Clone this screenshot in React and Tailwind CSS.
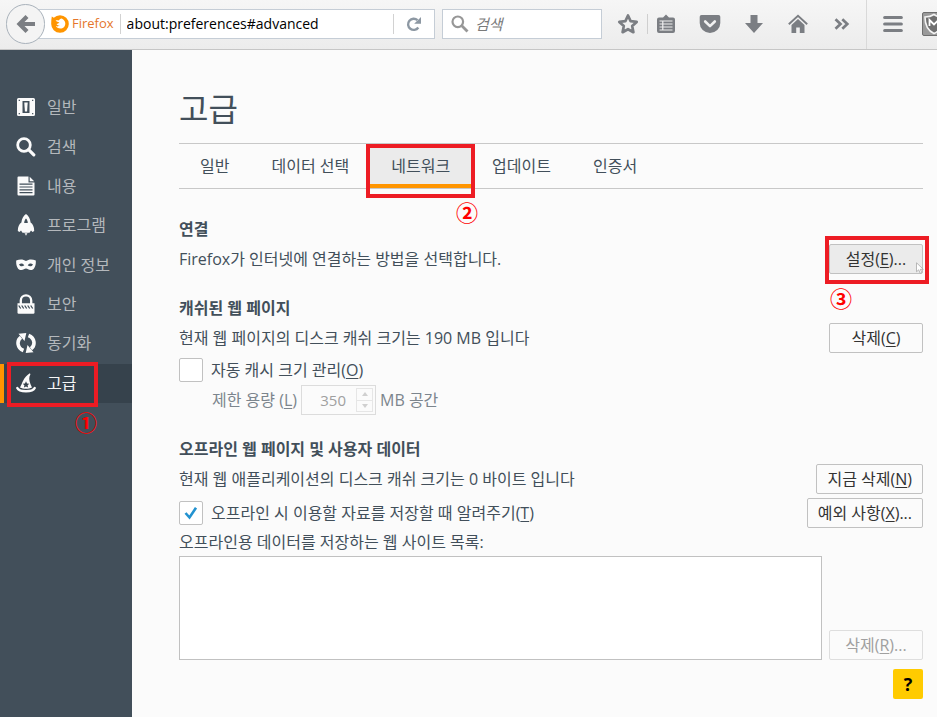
import React from "react";

const ICON = "h-5 w-5 shrink-0 text-[#fbfbfb]";

function SwitchIcon() {
  return (
    <svg viewBox="0 0 20 20" className={ICON} aria-hidden="true">
      <path fillRule="evenodd" fill="currentColor" d="M2.500 1h15A1.500 1.500 0 0 1 19 2.500v15a1.500 1.500 0 0 1-1.500 1.500h-15A1.500 1.500 0 0 1 1 17.500v-15A1.500 1.500 0 0 1 2.500 1zM6.500 4v12h7V4zM2.700 2.700v1.200h1.200V2.700zM16.100 2.700v1.200h1.200V2.700zM2.700 16.100v1.200h1.200v-1.200zM16.100 16.100v1.200h1.200v-1.200z" />
      <path fill="currentColor" d="M8.300 5.500h3.400l-.6 9H8.900z" />
    </svg>
  );
}

function SearchIcon() {
  return (
    <svg viewBox="0 0 20 20" className={ICON} fill="none" stroke="currentColor" aria-hidden="true">
      <circle cx="8" cy="8" r="6.300" strokeWidth="2.800" />
      <path d="M12.600 12.600l5.200 5.200" strokeWidth="3.200" strokeLinecap="round" />
    </svg>
  );
}

function DocIcon() {
  return (
    <svg viewBox="0 0 20 20" className={ICON} aria-hidden="true">
      <path fill="currentColor" d="M2.500.5h10V6.500H18.500v12a1 1 0 0 1-1 1h-15a1 1 0 0 1-1-1v-17a1 1 0 0 1 1-1z" />
      <path fill="currentColor" d="M13.700.8L18.200 5.300h-4.500z" />
      <path stroke="#424f5a" strokeWidth="1.200" d="M3.500 8.200h13M3.500 11h13M3.500 13.800h13M3.500 16.600h13" />
    </svg>
  );
}

function RocketIcon() {
  return (
    <svg viewBox="0 0 20 22" className="h-[22px] w-5 shrink-0 text-[#fbfbfb]" aria-hidden="true">
      <path fillRule="evenodd" fill="currentColor" d="M10 0c2.600 1.800 4.200 4.600 4.600 8.500 2.200 1.600 3.600 4 3.600 8.500l-1.700 1-1.500-1.500-1.500 2.200h-7L5 16.500 3.500 18l-1.700-1c0-4.500 1.400-6.900 3.600-8.500C5.800 4.600 7.400 1.800 10 0zm0 4.500c-1 1-1.700 2.500-1.800 4.500h3.600c-.1-2-.8-3.500-1.800-4.500z" />
      <path fill="currentColor" d="M8.300 18.500l1.700 3.300 1.700-3.300-.8.200-.9 1-.9-1z" />
    </svg>
  );
}

function MaskIcon() {
  return (
    <svg viewBox="0 0 20 20" className={ICON} aria-hidden="true">
      <path fillRule="evenodd" fill="currentColor" d="M.2 5.500c3.700-1.600 7.200-1.400 9.800.6 2.600-2 6.100-2.200 9.800-.6.300 5-1.300 9.500-5.200 9.500-2.100 0-3.100-1.600-4.600-1.600S7.500 15 5.400 15C1.500 15-.1 10.500.2 5.500zM3 9.400c1.200 2.200 3.500 2.300 5.300.9C7 8.200 4.800 7.900 3 9.400zm14 0c-1.800-1.500-4-1.200-5.300.9 1.800 1.400 4.100 1.300 5.300-.9z" />
    </svg>
  );
}

function LockIcon() {
  return (
    <svg viewBox="0 0 20 20" className={ICON} aria-hidden="true">
      <path fill="none" stroke="currentColor" strokeWidth="2.300" d="M4.800 10V6.500a5.200 5.200 0 0 1 10.400 0V10" />
      <path fill="currentColor" d="M1.500 9.300h17v9.200a1.200 1.200 0 0 1-1.200 1.200H2.700a1.200 1.200 0 0 1-1.200-1.200z" />
      <path stroke="#424f5a" strokeWidth="1.300" d="M2.700 11.500l2 3M5.700 11.500l2 3M8.700 11.500l2 3M11.700 11.500l2 3M14.700 11.500l2 3" />
    </svg>
  );
}

function SyncIcon() {
  return (
    <svg viewBox="0 0 20 20" className={ICON} aria-hidden="true">
      <path fill="none" stroke="currentColor" strokeWidth="3.600" d="M7.500 17.500C1 15 .5 7.500 5 4.200M12.500 2.500c6.500 2.500 7 10 2.500 13.300" />
      <path fill="currentColor" d="M2.500.8L10.300 0 8.500 8zM17.500 19.200l-7.800.8L11.500 12z" />
    </svg>
  );
}

function WizardIcon() {
  return (
    <svg viewBox="0 0 20 20" className={ICON} aria-hidden="true">
      <path fill="currentColor" d="M4 14.500C6.500 10.500 7 4.500 13.800.3c1.200 1 .3 1.700-.3 3.200-.8 2.500.2 6.500 2.500 11-3.300 1.800-8.700 1.800-12 0z" />
      <path fill="#36424c" d="M10 8.300l1 2.100 2.300.3-1.700 1.600.5 2.300-2.100-1.200-2.100 1.200.5-2.300-1.700-1.600 2.300-.3z" />
      <path fill="none" stroke="currentColor" strokeWidth="2.400" strokeLinecap="round" d="M1.300 15c2 4.300 15.400 4.300 17.400 0" />
    </svg>
  );
}

const categories = [
  { label: "일반", Icon: SwitchIcon },
  { label: "검색", Icon: SearchIcon },
  { label: "내용", Icon: DocIcon },
  { label: "프로그램", Icon: RocketIcon },
  { label: "개인 정보", Icon: MaskIcon },
  { label: "보안", Icon: LockIcon },
  { label: "동기화", Icon: SyncIcon },
  { label: "고급", Icon: WizardIcon, active: true },
];

const tabs = ["일반", "데이터 선택", "네트워크", "업데이트", "인증서"];

function Frame({ className }) {
  return <span aria-hidden="true" className={"pointer-events-none absolute border-4 border-[#ed1c24] " + className} />;
}

function Step({ children, className }) {
  return (
    <span className={"pointer-events-none absolute text-[22px] leading-6 font-bold text-[#ff0000] " + className}>
      {children}
    </span>
  );
}

function Key({ children }) {
  return (
    <>
      (<span className="underline underline-offset-2">{children}</span>)
    </>
  );
}

function PushButton({ children, className = "", ...rest }) {
  return (
    <button
      type="button"
      className={
        "h-[30px] min-w-[94px] shrink-0 rounded-xs border border-[#c1c1c1] px-2.5 whitespace-nowrap text-[#333] disabled:border-[#dedede] disabled:text-[#a0a0a0] " +
        className
      }
      {...rest}
    >
      {children}
    </button>
  );
}

function Check({ id, defaultChecked }) {
  return (
    <span className="relative h-6 w-6 shrink-0">
      <input
        id={id}
        type="checkbox"
        defaultChecked={defaultChecked}
        className="peer block h-6 w-6 appearance-none rounded-xs border border-[#c1c1c1] bg-white"
      />
      <svg viewBox="0 0 24 24" className="pointer-events-none absolute inset-0 hidden h-6 w-6 peer-checked:block" aria-hidden="true">
        <path d="M6.500 12l4 4.500L17 6.800" fill="none" stroke="#2292d0" strokeWidth="2.600" />
      </svg>
    </span>
  );
}

function ToolButton({ label, className = "", children }) {
  return (
    <button type="button" aria-label={label} className={"flex h-6 w-6 shrink-0 items-center justify-center text-[#7b7e83] " + className}>
      {children}
    </button>
  );
}

function Toolbar() {
  return (
    <header className="flex h-[50px] items-center overflow-hidden border-b border-[#c6c6c6] bg-linear-to-b from-[#f6f6f6] to-[#ececec] pb-px pl-1.5">
      <button
        type="button"
        aria-label="뒤로"
        className="z-10 flex h-10 w-[39px] shrink-0 items-center justify-center rounded-full border border-[#a9b2bb] bg-[#f4f4f4]"
      >
        <svg viewBox="0 0 20 20" className="h-5 w-5" aria-hidden="true">
          <path d="M11 2.500L3.500 10l7.500 7.500M4.500 10H19" fill="none" stroke="#7b7e83" strokeWidth="4.200" />
        </svg>
      </button>
      <div className="-ml-2 flex h-[30px] min-w-0 flex-1 items-center border border-[#c5cdd6] bg-white pl-[13px]">
        <svg viewBox="0 0 18 18" className="h-[18px] w-[18px] shrink-0" aria-hidden="true">
          <path fill="#ff9500" d="M.8 1.500l2 1.300A8.800 8.800 0 0 1 9 .2a8.800 8.800 0 1 1-8.800 8.800C.2 6.500.3 4 .8 1.500z" />
          <path fill="#fff" d="M4.600 5.800c.9-.6 2-.6 2.900-.2.800-1.200 1.700-1.800 3.200-2.200 2.400 1 3.600 3 3.600 5.200 0 3-2.100 5-4.900 5-2.300 0-3.800-1-4.600-2.800 1.300.8 2.500.8 4-.2-1.800.1-2.900-.6-3.200-1.500.5-.6 1.100-.7 1.700-.7.200-.6.700-1 1.300-1.300-1.500.1-2.700-.3-4-1.300z" />
        </svg>
        <span className="ml-[3px] text-[13px] text-[#e5762b]">Firefox</span>
        <span className="mx-1.5 h-5 w-px bg-[#d2d2d2]" />
        <input
          aria-label="주소"
          defaultValue="about:preferences#advanced"
          className="min-w-0 flex-1 bg-transparent text-sm text-black outline-none"
        />
        <span className="h-5 w-px bg-[#d2d2d2]" />
        <button type="button" aria-label="새로 고침" className="flex h-full w-10 shrink-0 items-center justify-center">
          <svg viewBox="0 0 16 16" className="h-4 w-4" aria-hidden="true">
            <path d="M12.300 11.500A5.600 5.600 0 1 1 11.500 4.200" fill="none" stroke="#8d98a3" strokeWidth="2.400" />
            <path d="M15 1v6.800H8.200z" fill="#8d98a3" />
          </svg>
        </button>
      </div>
      <div className="ml-[7px] flex h-[30px] w-40 shrink-0 items-center border border-[#c5cdd6] bg-white pl-2">
        <svg viewBox="0 0 18 18" className="h-[18px] w-[18px] shrink-0" fill="none" stroke="#979797" aria-hidden="true">
          <circle cx="6.800" cy="6.800" r="5.300" strokeWidth="2.200" />
          <path d="M10.800 10.800l5.700 5.700" strokeWidth="2.800" />
        </svg>
        <input
          type="search"
          aria-label="검색"
          placeholder="검색"
          className="ml-1.5 min-w-0 flex-1 bg-transparent text-[15px] italic outline-none placeholder:text-[#7a7a7a]"
        />
      </div>
      <ToolButton label="북마크" className="ml-3.5">
        <svg viewBox="0 0 22 22" className="h-[22px] w-[22px]" aria-hidden="true">
          <path d="M11 2.500l2.600 5.600 6.100.8-4.500 4.200 1.200 6.100L11 16.200l-5.400 3 1.200-6.100-4.500-4.200 6.100-.8z" fill="none" stroke="#7b7e83" strokeWidth="2.700" strokeLinejoin="round" />
        </svg>
      </ToolButton>
      <span className="ml-[7px] h-5 w-px shrink-0 bg-[#cfcfcf]" />
      <ToolButton label="북마크 목록" className="ml-1.5">
        <svg viewBox="0 0 20 20" className="h-5 w-5" aria-hidden="true">
          <path fill="currentColor" d="M7 3.500L10 .5l3 3h4a2 2 0 0 1 2 2V17a2 2 0 0 1-2 2H3a2 2 0 0 1-2-2V5.500a2 2 0 0 1 2-2z" />
          <path stroke="#f0f0f0" strokeWidth="1.200" d="M3.500 7h13M3.500 10h13M3.500 13h13M3.500 16h13M6.800 6.500v10" />
        </svg>
      </ToolButton>
      <ToolButton label="Pocket" className="ml-5">
        <svg viewBox="0 0 22 20" className="h-5 w-[22px]" aria-hidden="true">
          <path fill="currentColor" d="M2.500 1h17a1.800 1.800 0 0 1 1.800 1.800V9a10.300 10 0 0 1-20.600 0V2.800A1.800 1.800 0 0 1 2.500 1z" />
          <path d="M6.200 7.500l4.800 4.600 4.800-4.600" fill="none" stroke="#f2f2f2" strokeWidth="2.600" strokeLinecap="round" strokeLinejoin="round" />
        </svg>
      </ToolButton>
      <ToolButton label="다운로드" className="ml-5">
        <svg viewBox="0 0 20 20" className="h-5 w-5" aria-hidden="true">
          <path fill="currentColor" d="M6.500 1h7v8H19l-9 10-9-10h5.500z" />
        </svg>
      </ToolButton>
      <ToolButton label="홈" className="ml-5">
        <svg viewBox="0 0 20 20" className="h-5 w-5" aria-hidden="true">
          <path d="M.8 10.300L10 1.800l9.200 8.500" fill="none" stroke="currentColor" strokeWidth="1.900" />
          <path fill="currentColor" d="M10 5l6.500 6v8h-4.700v-5.500H8.200V19H3.500v-8z" />
        </svg>
      </ToolButton>
      <ToolButton label="더 보기" className="ml-5">
        <svg viewBox="0 0 16 16" className="h-4 w-4" aria-hidden="true">
          <path d="M1.500 3.200L6.500 8l-5 4.800M8.300 3.200l5 4.800-5 4.800" fill="none" stroke="currentColor" strokeWidth="2.700" />
        </svg>
      </ToolButton>
      <span className="ml-3 h-[49px] w-px shrink-0 bg-[#d9d9d9]" />
      <ToolButton label="메뉴" className="ml-3.5">
        <svg viewBox="0 0 20 18" className="h-[18px] w-5" aria-hidden="true">
          <path d="M1.700 2.500h16.600M1.700 9h16.600M1.700 15.500h16.600" stroke="currentColor" strokeWidth="3.200" strokeLinecap="round" />
        </svg>
      </ToolButton>
      <button type="button" aria-label="McAfee" className="ml-[17px] flex h-6 w-[15px] shrink-0 justify-start overflow-hidden">
        <svg viewBox="0 0 24 24" className="h-6 w-6 shrink-0" aria-hidden="true">
          <rect x=".5" y=".5" width="23" height="23" rx="1.500" fill="#9a9a9a" stroke="#6f6f6f" />
          <path d="M3 5c3.500 0 6.500-.8 9-2.500C14.500 4.200 17.500 5 21 5c0 8-2.500 13.500-9 16.500C5.500 18.500 3 13 3 5z" fill="#707070" stroke="#f4f4f4" strokeWidth="1.600" />
          <path d="M7.500 14V8l4.500 4.500L16.500 8v6" fill="none" stroke="#fff" strokeWidth="1.800" />
        </svg>
      </button>
    </header>
  );
}

function Sidebar() {
  return (
    <nav className="w-[132px] shrink-0 bg-[#424f5a] pt-[38px]">
      <ul className="flex h-[315px] flex-col">
        {categories.map(({ label, Icon, active }) => (
          <li key={label} className="relative flex flex-1">
            <a
              href={"#" + label}
              className={
                active
                  ? "flex flex-1 items-center gap-[11px] border-l-4 border-[#ff9500] bg-[#36424c] pb-px pl-3 text-[#f5f5f5]"
                  : "flex flex-1 items-center gap-[11px] pb-px pl-4 text-[#b4b8bc]"
              }
            >
              <Icon />
              {label}
            </a>
            {active && (
              <>
                <Frame className="-top-0.5 -bottom-1 left-[7px] w-[91px]" />
                <Step className="top-[46px] left-[75px]">①</Step>
              </>
            )}
          </li>
        ))}
      </ul>
    </nav>
  );
}

function Tabs() {
  return (
    <div role="tablist" className="flex h-[46px] border-y border-[#c8c8c8]">
      {tabs.map((tab) => {
        const active = tab === "네트워크";
        return (
          <div key={tab} className="relative flex">
            <button
              type="button"
              role="tab"
              aria-selected={active}
              className={
                active
                  ? "border-b-4 border-[#ff9500] bg-[#ebebeb] px-[21px] pt-1"
                  : "px-[21px]"
              }
            >
              {tab}
            </button>
            {active && (
              <>
                <Frame className="-inset-x-1 top-0 -bottom-2.5" />
                <Step className="top-14 -right-[7px]">②</Step>
              </>
            )}
          </div>
        );
      })}
    </div>
  );
}

function Heading({ children }) {
  return <h2 className="font-bold leading-[30px]">{children}</h2>;
}

export default function App() {
  return (
    <div className="flex min-h-screen flex-col bg-[#fbfbfb] font-['Open_Sans','Noto_Sans_CJK_KR',sans-serif] text-base text-[#424f5a]">
      <Toolbar />
      <div className="flex flex-1">
        <Sidebar />
        <main className="min-w-0 flex-1 pt-9 pr-3.5 pb-[18px] pl-[47px]">
          <h1 className="mb-[11px] text-[32px] leading-[46px]">고급</h1>
          <Tabs />

          <section className="mt-[25px]">
            <Heading>연결</Heading>
            <div className="flex items-center justify-between">
              <p>Firefox가 인터넷에 연결하는 방법을 선택합니다.</p>
              <div className="relative flex">
                <PushButton className="bg-[#ebebeb]">
                  설정<Key>E</Key>...
                </PushButton>
                <svg viewBox="0 0 10 12" className="pointer-events-none absolute -right-0.5 bottom-0 h-3 w-2.5" aria-hidden="true">
                  <path d="M1.500.8v9l2.200-2 1.500 3.500 1.600-.7-1.500-3.300h3z" fill="#fff" stroke="#a8a8a8" strokeWidth=".8" />
                </svg>
                <Frame className="-top-2 -right-1.5 -bottom-2.5 -left-1" />
                <Step className="top-[42px] left-px">③</Step>
              </div>
            </div>
          </section>

          <section className="mt-[19px]">
            <Heading>캐쉬된 웹 페이지</Heading>
            <div className="flex items-center justify-between">
              <p>현재 웹 페이지의 디스크 캐쉬 크기는 190 MB 입니다</p>
              <PushButton>
                삭제<Key>C</Key>
              </PushButton>
            </div>
            <div className="mt-[3px] flex h-7 items-center gap-2">
              <Check id="auto-cache" />
              <label htmlFor="auto-cache">
                자동 캐시 크기 관리<Key>O</Key>
              </label>
            </div>
            <div className="mt-px flex items-center gap-1 pl-[33px] text-[#7c858d]">
              <label htmlFor="cache-size">
                제한 용량 <Key>L</Key>
              </label>
              <span className="flex h-[30px] w-[75px] items-center border border-[#dcdcdc] pr-0.5">
                <input
                  id="cache-size"
                  type="number"
                  defaultValue={350}
                  disabled
                  className="min-w-0 flex-1 appearance-none bg-transparent pr-2.5 text-right text-[15px] text-[#a0a0a0] [&::-webkit-inner-spin-button]:appearance-none"
                />
                <span className="flex h-6 w-[17px] flex-col border border-[#e6e6e6]">
                  <button type="button" disabled aria-label="늘리기" className="flex flex-1 items-center justify-center border-b border-[#e6e6e6]">
                    <svg viewBox="0 0 6 4" className="h-1 w-1.5" aria-hidden="true">
                      <path d="M3 0l3 4H0z" fill="#d0d0d0" />
                    </svg>
                  </button>
                  <button type="button" disabled aria-label="줄이기" className="flex flex-1 items-center justify-center">
                    <svg viewBox="0 0 6 4" className="h-1 w-1.5" aria-hidden="true">
                      <path d="M3 4l3-4H0z" fill="#d0d0d0" />
                    </svg>
                  </button>
                </span>
              </span>
              <span>MB 공간</span>
            </div>
          </section>

          <section className="mt-[19px]">
            <Heading>오프라인 웹 페이지 및 사용자 데이터</Heading>
            <div className="flex items-center justify-between">
              <p>현재 웹 애플리케이션의 디스크 캐쉬 크기는 0 바이트 입니다</p>
              <PushButton>
                지금 삭제<Key>N</Key>
              </PushButton>
            </div>
            <div className="mt-1 flex items-center gap-2">
              <Check id="offline-notify" defaultChecked />
              <label htmlFor="offline-notify">
                오프라인 시 이용할 자료를 저장할 때 알려주기<Key>T</Key>
              </label>
              <PushButton className="ml-auto">
                예외 사항<Key>X</Key>...
              </PushButton>
            </div>
            <label htmlFor="offline-sites" className="block leading-7">
              오프라인용 데이터를 저장하는 웹 사이트 목록:
            </label>
            <div className="flex items-end gap-[7px]">
              <select id="offline-sites" size={4} className="h-[104px] min-w-0 flex-1 border border-[#c1c1c1] bg-white" />
              <PushButton disabled>
                삭제<Key>R</Key>...
              </PushButton>
            </div>
          </section>

          <div className="mt-[9px] flex justify-end">
            <button type="button" aria-label="도움말" className="h-[30px] w-[30px] rounded-xs bg-[#ffcb00] text-lg leading-none font-bold text-black">
              ?
            </button>
          </div>
        </main>
      </div>
    </div>
  );
}
